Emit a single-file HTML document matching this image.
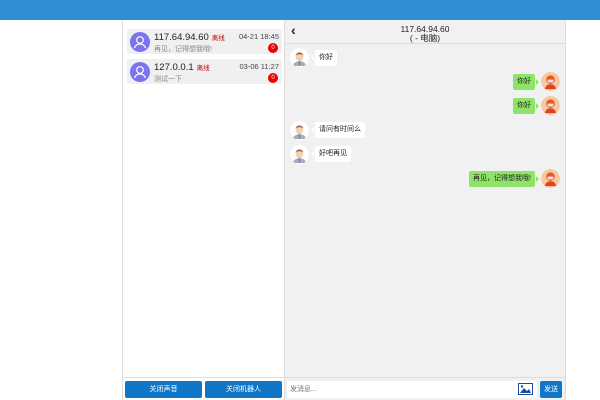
<!DOCTYPE html>
<html><head><meta charset="utf-8"><style>
*{margin:0;padding:0;box-sizing:border-box}
body{width:600px;height:400px;background:#fff;position:relative;overflow:hidden;font-family:"Liberation Sans","Noto Sans CJK SC",sans-serif;font-size:8px;color:#333}
.top{position:absolute;left:0;top:0;width:600px;height:20px;background:#2f8fd6}
.left{position:absolute;left:122px;top:20px;width:163px;height:380px;background:#fff;border-left:1px solid #ddd;border-right:1px solid #ddd}
.right{position:absolute;left:285px;top:20px;width:281px;height:380px;background:#f1f1f1;border-right:1px solid #ddd}
.item{position:absolute;left:4px;width:155px;height:25px;background:#f0f0f0;border-radius:2px}
.av{position:absolute;left:3px;top:3px;width:20px;height:20px;border-radius:50%;background:#7b73ef}
.ip{position:absolute;left:27px;top:3px;font-size:9.5px;color:#222}
.ip i{font-style:normal;font-size:6.5px;color:#b00;margin-left:3px}
.sub{position:absolute;left:27px;top:15px;font-size:7px;color:#888}
.tm{position:absolute;right:3px;top:3px;font-size:7.5px;color:#444}
.bd{position:absolute;right:4px;top:14px;width:10px;height:10px;border-radius:50%;background:#e00;color:#fff;font-size:6px;text-align:center;line-height:10px}
.hdr{position:absolute;left:0;top:0;width:280px;height:24px;border-bottom:1px solid #ddd;text-align:center;font-size:8.5px;line-height:9px;padding-top:5px;color:#222}
.back{position:absolute;left:6px;top:3px;font-size:14px;line-height:14px;font-weight:bold}
.msg{position:absolute;height:16px;line-height:16px;padding:0 4px;font-size:7px;border-radius:2px;color:#222}
.msg.l{background:#fff}
.msg.r{background:#8ee468}
.msg.l:before{content:"";position:absolute;left:-4px;top:5px;border:3px solid transparent;border-right-color:#fff;border-left:0}
.msg.r:after{content:"";position:absolute;right:-4px;top:5px;border:3px solid transparent;border-left-color:#8ee468;border-right:0}
.pa{position:absolute;width:19px;height:19px;border-radius:50%}
.btn{position:absolute;top:381px;height:17px;background:#0f76c8;color:#fff;font-size:7px;text-align:center;line-height:17px;border-radius:2px}
</style></head><body>
<div class="top"></div>
<div class="left">
 <div class="item" style="top:9px"><div class="av"><svg width="20" height="20" viewBox="0 0 20 20"><circle cx="10" cy="8" r="3.3" fill="none" stroke="#fff" stroke-width="1.2"/><path d="M4.5 16c1-3 3-4 5.5-4s4.5 1 5.5 4" fill="none" stroke="#fff" stroke-width="1.2"/></svg></div><div class="ip">117.64.94.60<i>离线</i></div><div class="sub">再见，记得想我哦!</div><div class="tm">04-21 18:45</div><div class="bd">0</div></div>
 <div class="item" style="top:39px"><div class="av"><svg width="20" height="20" viewBox="0 0 20 20"><circle cx="10" cy="8" r="3.3" fill="none" stroke="#fff" stroke-width="1.2"/><path d="M4.5 16c1-3 3-4 5.5-4s4.5 1 5.5 4" fill="none" stroke="#fff" stroke-width="1.2"/></svg></div><div class="ip">127.0.0.1<i>离线</i></div><div class="sub">测试一下</div><div class="tm">03-06 11:27</div><div class="bd">0</div></div>
 <div style="position:absolute;left:0;top:357px;width:162px;border-top:1px solid #ddd"></div>
</div>
<div class="right">
 <div class="hdr"><div class="back">&#8249;</div>117.64.94.60<br>( - 电脑)</div>
 <div style="position:absolute;left:0;top:357px;width:280px;border-top:1px solid #ddd"></div>
</div>
<svg class="pa" style="left:290px;top:48px" viewBox="0 0 20 20"><circle cx="10" cy="10" r="10" fill="#fff"/><path d="M3 19c1-4 4-5 7-5s6 1 7 5z" fill="#aab"/><path d="M9 14h2l-.5 5h-1z" fill="#3a8fd0"/><ellipse cx="10" cy="9" rx="4" ry="4.8" fill="#f2cfb0"/><path d="M6 8c0-4 8-4 8 0c-1-2-7-2-8 0z" fill="#8a5a3a"/></svg>
<svg class="pa" style="left:290px;top:121px" viewBox="0 0 20 20"><circle cx="10" cy="10" r="10" fill="#fff"/><path d="M3 19c1-4 4-5 7-5s6 1 7 5z" fill="#aab"/><path d="M9 14h2l-.5 5h-1z" fill="#3a8fd0"/><ellipse cx="10" cy="9" rx="4" ry="4.8" fill="#f2cfb0"/><path d="M6 8c0-4 8-4 8 0c-1-2-7-2-8 0z" fill="#8a5a3a"/></svg>
<svg class="pa" style="left:290px;top:145px" viewBox="0 0 20 20"><circle cx="10" cy="10" r="10" fill="#fff"/><path d="M3 19c1-4 4-5 7-5s6 1 7 5z" fill="#aab"/><path d="M9 14h2l-.5 5h-1z" fill="#3a8fd0"/><ellipse cx="10" cy="9" rx="4" ry="4.8" fill="#f2cfb0"/><path d="M6 8c0-4 8-4 8 0c-1-2-7-2-8 0z" fill="#8a5a3a"/></svg>
<div class="msg l" style="left:315px;top:50px">你好</div>
<div class="msg l" style="left:315px;top:122px">请问有时间么</div>
<div class="msg l" style="left:315px;top:146px">好吧再见</div>
<svg class="pa" style="left:541px;top:72px" viewBox="0 0 20 20"><circle cx="10" cy="10" r="10" fill="#f6c9a0"/><path d="M4 18c1-4 3-5 6-5s5 1 6 5z" fill="#d42"/><circle cx="10" cy="8" r="4.5" fill="#e8581c"/><rect x="7" y="8" width="6" height="3" fill="#fde"/></svg>
<svg class="pa" style="left:541px;top:96px" viewBox="0 0 20 20"><circle cx="10" cy="10" r="10" fill="#f6c9a0"/><path d="M4 18c1-4 3-5 6-5s5 1 6 5z" fill="#d42"/><circle cx="10" cy="8" r="4.5" fill="#e8581c"/><rect x="7" y="8" width="6" height="3" fill="#fde"/></svg>
<svg class="pa" style="left:541px;top:169px" viewBox="0 0 20 20"><circle cx="10" cy="10" r="10" fill="#f6c9a0"/><path d="M4 18c1-4 3-5 6-5s5 1 6 5z" fill="#d42"/><circle cx="10" cy="8" r="4.5" fill="#e8581c"/><rect x="7" y="8" width="6" height="3" fill="#fde"/></svg>
<div class="msg r" style="right:65px;top:74px">你好</div>
<div class="msg r" style="right:65px;top:98px">你好</div>
<div class="msg r" style="right:65px;top:171px">再见，记得想我哦!</div>
<div class="btn" style="left:125px;width:77px">关闭声音</div>
<div class="btn" style="left:205px;width:77px">关闭机器人</div>
<div style="position:absolute;left:287px;top:381px;width:250px;height:17px;background:#fff;border-radius:2px;font-size:7px;color:#777;line-height:17px;padding-left:3px">发消息...</div>
<svg style="position:absolute;left:518px;top:383px" width="15" height="12" viewBox="0 0 15 12"><rect x=".5" y=".5" width="14" height="11" fill="#fff" stroke="#1a4da0"/><path d="M2 10l4-5 3 3 2-2 2 4z" fill="#1a4da0"/><circle cx="4" cy="3.5" r="1.2" fill="#1a4da0"/></svg>
<div class="btn" style="left:540px;width:22px">发送</div>
</body></html>
